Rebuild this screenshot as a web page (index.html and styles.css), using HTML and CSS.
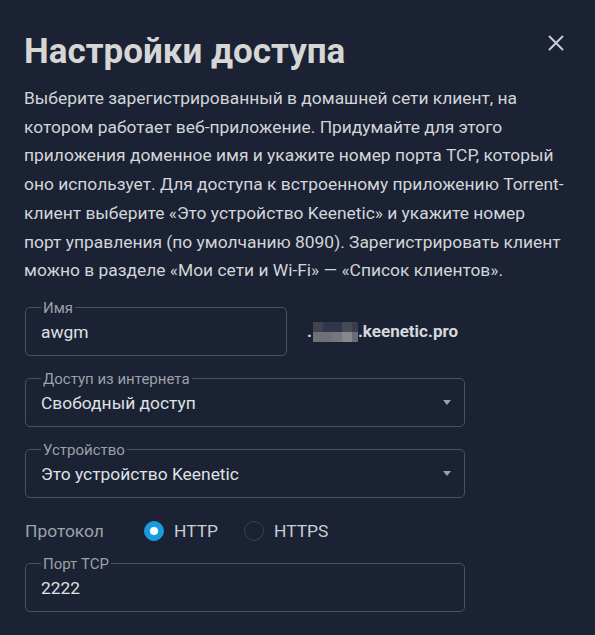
FILE: index.html
```html
<!DOCTYPE html>
<html lang="ru">
<head>
<meta charset="utf-8">
<title>Настройки доступа</title>
<link rel="stylesheet" href="styles.css">
</head>
<body>
<div class="dialog">
  <header class="head">
    <h1 class="title">Настройки доступа</h1>
    <button class="close" aria-label="Закрыть">
      <svg width="18" height="18" viewBox="0 0 18 18"><path d="M2 2L16 16M16 2L2 16" stroke="#c9ccd2" stroke-width="2" fill="none"/></svg>
    </button>
  </header>
  <p class="desc">Выберите зарегистрированный в домашней сети клиент, на котором работает веб-приложение. Придумайте для этого приложения доменное имя и укажите номер порта TCP, который оно использует. Для доступа к встроенному приложению Torrent-клиент выберите «Это устройство Keenetic» и укажите номер порт управления (по умолчанию 8090). Зарегистрировать клиент можно в разделе «Мои сети и Wi-Fi» — «Список клиентов».</p>

  <div class="name-row">
    <fieldset class="field field-name">
      <legend class="legend">Имя</legend>
      <div class="value">awgm</div>
    </fieldset>
    <div class="domain">.<span class="mosaic"><span class="mrow"><i class="c1"></i><i class="c2"></i><i class="c3"></i><i class="c4"></i></span><span class="mrow"><i class="c5"></i><i class="c6"></i><i class="c7"></i><i class="c8"></i></span></span>.keenetic.pro</div>
  </div>

  <fieldset class="field">
    <legend class="legend">Доступ из интернета</legend>
    <div class="value select">Свободный доступ<span class="arrow"></span></div>
  </fieldset>

  <fieldset class="field">
    <legend class="legend">Устройство</legend>
    <div class="value select">Это устройство Keenetic<span class="arrow"></span></div>
  </fieldset>

  <div class="proto">
    <span class="proto-label">Протокол</span>
    <label class="opt"><span class="radio checked"></span>HTTP</label>
    <label class="opt"><span class="radio"></span>HTTPS</label>
  </div>

  <fieldset class="field">
    <legend class="legend">Порт TCP</legend>
    <div class="value">2222</div>
  </fieldset>
</div>
</body>
</html>
```

FILE: styles.css
```css
html, body {
  margin: 0;
  padding: 0;
  background: #1b2233;
}
body {
  font-family: Roboto, "Noto Sans", "Liberation Sans", sans-serif;
  color: #d3d5d9;
}
.dialog {
  width: 595px;
  height: 635px;
  box-sizing: border-box;
  padding: 31px 24px 0 24px;
  overflow: hidden;
}
.head {
  display: flex;
  justify-content: space-between;
  align-items: flex-start;
}
.title {
  margin: 0;
  font-size: 35px;
  line-height: 42px;
  font-weight: 700;
  color: #d6d6d6;
}
.close {
  background: none;
  border: 0;
  padding: 0;
  margin: 3px 6px 0 0;
  width: 18px;
  height: 18px;
  display: block;
}
.close svg { display: block; }
.desc {
  margin: 11px 0 0 0;
  width: 541px;
  font-size: 17.4px;
  line-height: 28.7px;
  color: #d3d5d9;
}
.name-row {
  margin-top: 15px;
  display: flex;
  align-items: flex-end;
}
.field {
  margin: 15px 0 0 1px;
  padding: 6px 14px 13px 14px;
  border: 1px solid #4a5162;
  border-radius: 5px;
  width: 440px;
  box-sizing: border-box;
  min-width: 0;
}
.name-row .field {
  margin-top: 0;
  width: 262px;
}
.legend {
  padding: 0 2px;
  margin: 0 0 0 1px;
  font-size: 15px;
  line-height: 16px;
  color: #9ba0a9;
}
.value {
  font-size: 17.4px;
  line-height: 20px;
  color: #dfe1e5;
  padding-left: 1px;
}
.select {
  display: flex;
  justify-content: space-between;
  align-items: center;
}
.arrow {
  width: 0;
  height: 0;
  border-left: 4px solid transparent;
  border-right: 4px solid transparent;
  border-top: 5px solid #9ba0a9;
  margin-right: -1px;
}
.domain {
  margin: 0 0 15px 20px;
  font-size: 17px;
  line-height: 20px;
  font-weight: 700;
  color: #d6d8dc;
  display: flex;
  align-items: baseline;
}
.mosaic {
  display: inline-flex;
  flex-direction: column;
  width: 45px;
  height: 20px;
  margin: 0 0 0 1px;
  align-self: flex-end;
  position: relative;
  top: 1px;
}
.mrow { display: flex; height: 10px; }
.mrow i { display: block; height: 10px; }
.c1 { width: 10px; background: #40444f; }
.c2 { width: 19px; background: #31374a; }
.c3 { width: 10px; background: #474a55; }
.c4 { width: 6px; background: #3a3e4a; }
.c5 { width: 19px; background: #6f7078; }
.c6 { width: 10px; background: #76777d; }
.c7 { width: 10px; background: #86878b; }
.c8 { width: 6px; background: #6b6d74; }
.proto {
  display: flex;
  align-items: center;
  height: 20px;
  margin: 23px 0 14px 1px;
  font-size: 17.4px;
}
.proto-label {
  width: 119px;
  color: #9ea2aa;
}
.opt {
  display: flex;
  align-items: center;
  gap: 10px;
  margin-right: 26px;
  color: #c9cdd3;
}
.radio {
  width: 20px;
  height: 20px;
  box-sizing: border-box;
  border-radius: 50%;
  border: 1.5px solid #38435a;
  display: flex;
  align-items: center;
  justify-content: center;
}
.radio.checked {
  background: #1c9ae0;
  border-color: #1c9ae0;
}
.radio.checked::after {
  content: "";
  width: 8px;
  height: 8px;
  border-radius: 50%;
  background: #ffffff;
}
```
